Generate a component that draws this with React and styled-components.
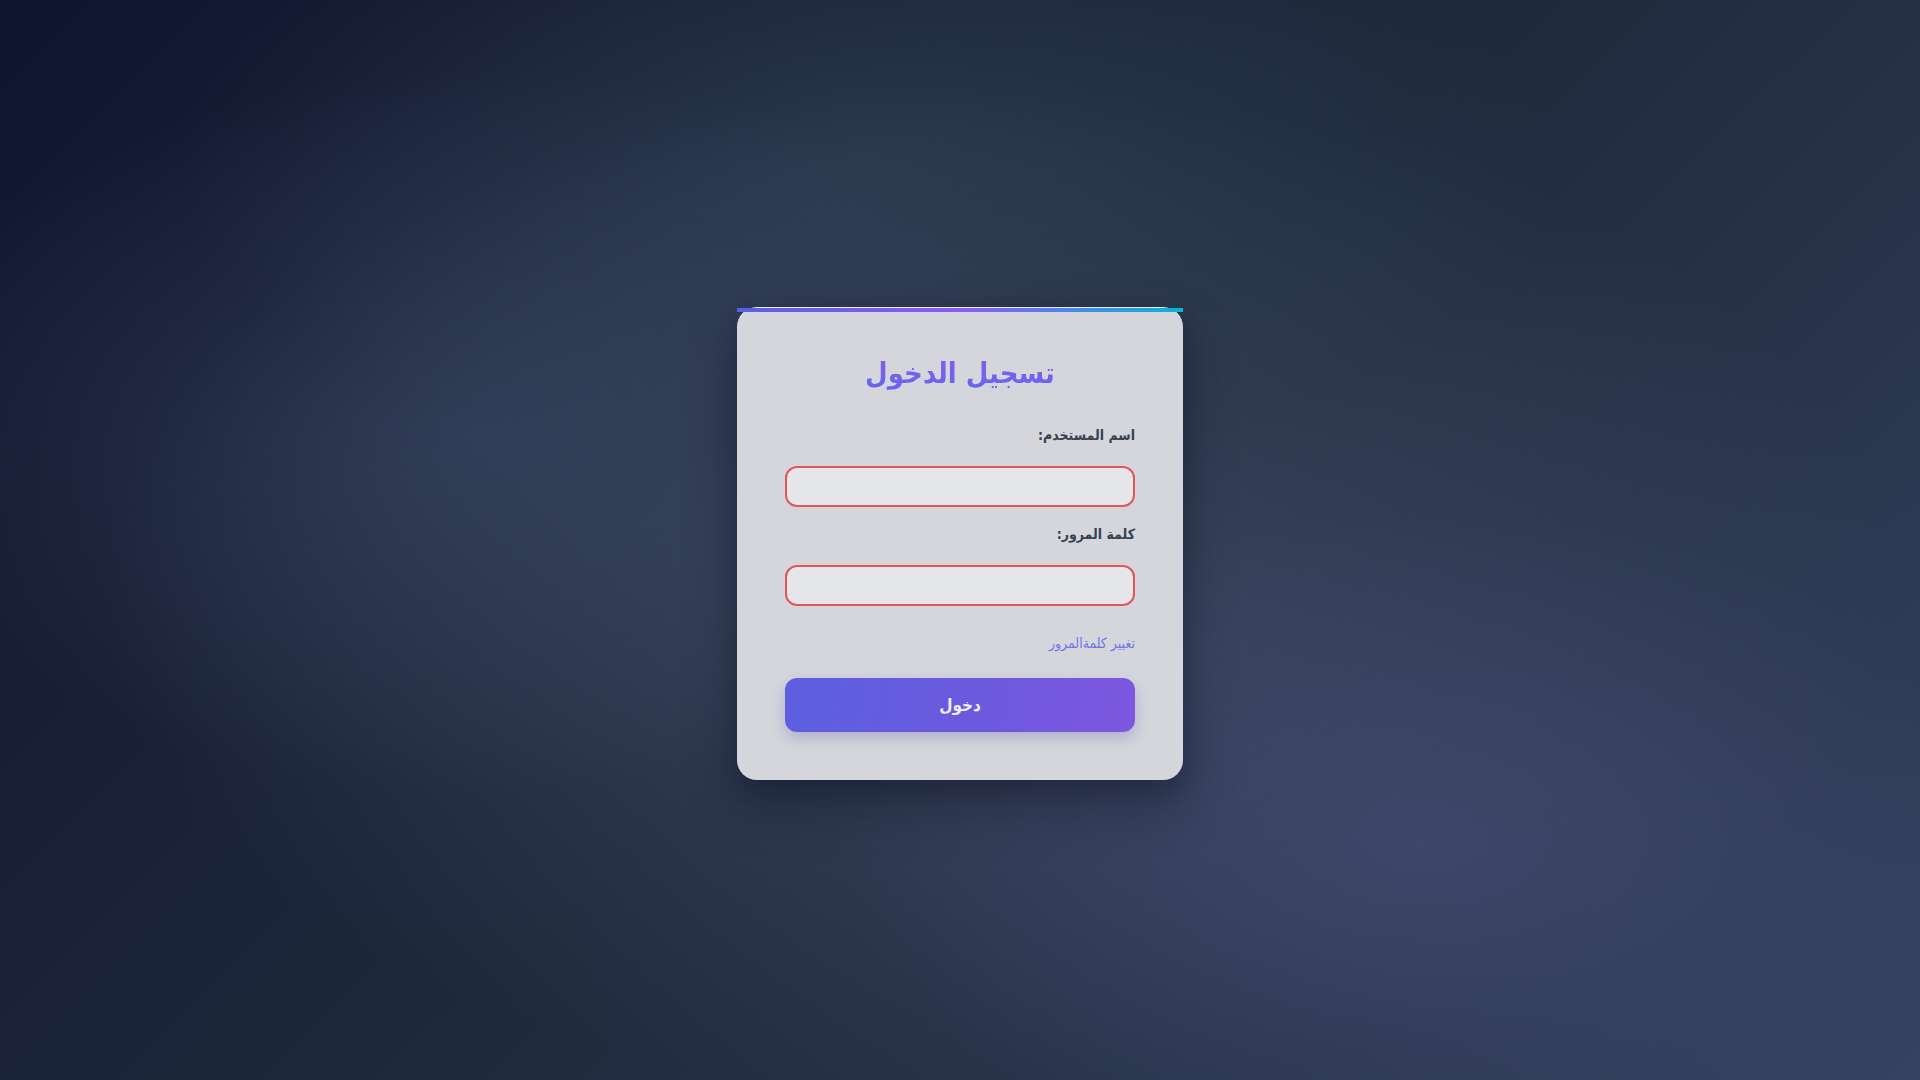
import React from "react";
import styled, { createGlobalStyle } from "styled-components";

const Global = createGlobalStyle`
  html, body, #root { margin: 0; padding: 0; height: 100%; }
  body {
    font-family: "DejaVu Sans Condensed", "DejaVu Sans", sans-serif;
  }
  * { box-sizing: border-box; }
`;

const Page = styled.div`
  min-height: 100vh;
  padding-top: 7px;
  display: flex;
  align-items: center;
  justify-content: center;
  background:
    radial-gradient(ellipse 38% 38% at 74% 78%, rgba(88, 90, 145, 0.35), transparent 80%),
    radial-gradient(ellipse 40% 42% at 25% 40%, rgba(68, 82, 112, 0.45), transparent 80%),
    radial-gradient(ellipse 45% 35% at 45% 15%, rgba(62, 82, 104, 0.45), transparent 80%),
    radial-gradient(ellipse 55% 55% at 52% 55%, rgba(70, 80, 108, 0.7), transparent 85%),
    linear-gradient(135deg, #10152f 0%, #1e293b 50%, #364260 100%);
`;

const Card = styled.form`
  position: relative;
  width: 446px;
  padding: 48px;
  background: #d4d6dc;
  border-radius: 20px;
  border-top: 1px solid rgba(255, 255, 255, 0.55);
  box-shadow: 0 25px 50px rgba(10, 14, 30, 0.35), 0 8px 20px rgba(10, 14, 30, 0.2);
  direction: rtl;
  display: flex;
  flex-direction: column;

  &::before {
    content: "";
    position: absolute;
    top: 0;
    left: 0;
    right: 0;
    height: 4px;
    background: linear-gradient(90deg, #5b5fe3, #8b5cf6 50%, #06b6d4);
  }
`;

const Title = styled.h1`
  margin: 0 0 34px;
  text-align: center;
  font-size: 29px;
  line-height: 34px;
  font-weight: 700;
  background: linear-gradient(180deg, #8a5ce8, #6366f1);
  -webkit-background-clip: text;
  background-clip: text;
  color: transparent;
`;

const Group = styled.div`
  display: flex;
  flex-direction: column;
  gap: 20px;
  margin-bottom: 16px;
`;

const Label = styled.label`
  font-size: 14px;
  line-height: 22px;
  font-weight: 700;
  color: #374151;
  text-align: right;
`;

const Input = styled.input`
  height: 41px;
  width: 100%;
  border: 2px solid #e25656;
  border-radius: 12px;
  background: #e5e6ea;
  padding: 0 14px;
  font-size: 15px;
  font-family: inherit;
  outline: none;
`;

const LinkRow = styled.div`
  margin-top: 11px;
  text-align: right;
`;

const ForgotLink = styled.a`
  font-size: 14px;
  line-height: 20px;
  color: #7373e6;
  text-decoration: none;
`;

const Submit = styled.button`
  margin-top: 25px;
  height: 54px;
  width: 100%;
  border: none;
  border-radius: 12px;
  background: linear-gradient(100deg, #5c5fe0 0%, #6a5ade 50%, #7d57e0 100%);
  color: #eeeaf8;
  font-family: inherit;
  font-size: 17px;
  font-weight: 700;
  box-shadow: 0 6px 14px rgba(70, 60, 160, 0.25);
  cursor: pointer;
`;

export default function App() {
  return (
    <>
      <Global />
      <Page>
        <Card onSubmit={(e) => e.preventDefault()}>
          <Title>تسجيل الدخول</Title>
          <Group>
            <Label>اسم المستخدم:</Label>
            <Input type="text" />
          </Group>
          <Group>
            <Label>كلمة المرور:</Label>
            <Input type="password" />
          </Group>
          <LinkRow>
            <ForgotLink href="#">تغيير كلمةالمرور</ForgotLink>
          </LinkRow>
          <Submit type="submit">دخول</Submit>
        </Card>
      </Page>
    </>
  );
}
